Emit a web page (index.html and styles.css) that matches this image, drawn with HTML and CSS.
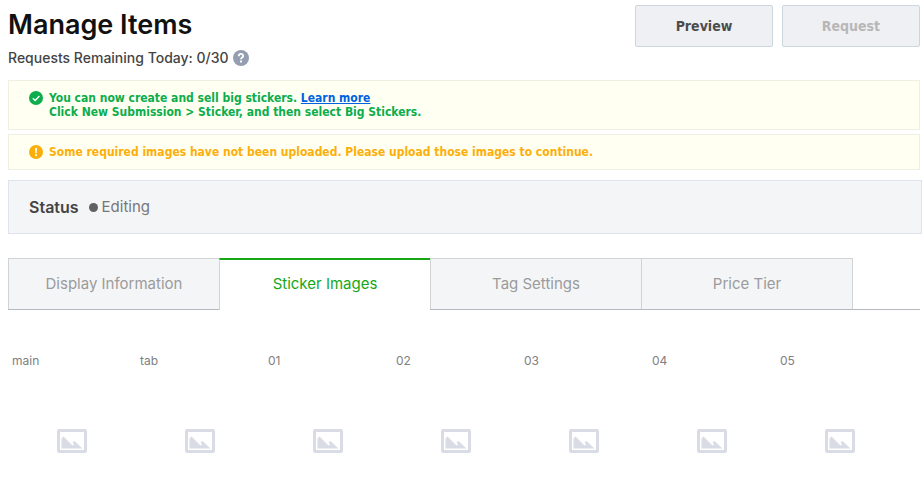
FILE: index.html
```html
<!DOCTYPE html>
<html lang="en">
<head>
<meta charset="utf-8">
<meta name="viewport" content="width=device-width, initial-scale=1">
<title>Manage Items</title>
<link rel="stylesheet" href="styles.css">
</head>
<body>
<svg class="sprite" aria-hidden="true">
  <symbol id="picture" viewBox="0 0 30 24">
    <rect x="1.500" y="1.500" width="27" height="21" rx="0.500" fill="none" stroke="#d9dce4" stroke-width="3"/>
    <path d="M4.500 19.500V9.500L6.500 7.500L15.500 16.500L17 15.500L15.500 13.500L17.500 12L25.500 19.500Z" fill="#d9dce4"/>
  </symbol>
</svg>
<main class="page">
  <header class="header">
    <div class="heading">
      <h1 class="title">Manage Items</h1>
      <p class="quota">Requests Remaining Today: 0/30
        <button class="help" type="button" aria-label="Help">
          <svg class="help-icon" viewBox="0 0 16 16" aria-hidden="true">
            <circle cx="8" cy="8" r="8" fill="#959db0"/>
            <path d="M5.800 6.200C5.800 3.200 10.200 3.300 10.200 5.900C10.200 7.500 8 7.500 8 9.300" fill="none" stroke="#fff" stroke-width="1.800"/>
            <rect x="7" y="10.500" width="2" height="2" fill="#fff"/>
          </svg>
        </button>
      </p>
    </div>
    <div class="actions">
      <button class="action" type="button">Preview</button>
      <button class="action" type="button" disabled>Request</button>
    </div>
  </header>

  <section class="notices">
    <div class="notice success">
      <svg class="notice-icon" viewBox="0 0 14 14" aria-hidden="true">
        <circle cx="7" cy="7" r="7" fill="#0cad4c"/>
        <path d="M3.800 7.200L6.200 9.400L10.400 5" fill="none" stroke="#fff" stroke-width="1.400"/>
      </svg>
      <p class="notice-text">You can now create and sell big stickers. <a class="more" href="#">Learn more</a><br>Click New Submission &gt; Sticker, and then select Big Stickers.</p>
    </div>
    <div class="notice warning">
      <svg class="notice-icon" viewBox="0 0 14 14" aria-hidden="true">
        <circle cx="7" cy="7" r="7" fill="#fcaf0b"/>
        <path d="M6 3H8L7.700 8.200H6.300ZM6.100 9.300H7.900V11H6.100Z" fill="#fff"/>
      </svg>
      <p class="notice-text">Some required images have not been uploaded. Please upload those images to continue.</p>
    </div>
  </section>

  <dl class="status">
    <dt class="status-name">Status</dt>
    <dd class="status-value">Editing</dd>
  </dl>

  <nav class="tabs">
    <a class="tab" href="#">Display Information</a>
    <a class="tab active" href="#" aria-current="page">Sticker Images</a>
    <a class="tab" href="#">Tag Settings</a>
    <a class="tab" href="#">Price Tier</a>
  </nav>

  <ul class="gallery">
    <li class="item"><span class="label">main</span><svg class="thumb" aria-hidden="true"><use href="#picture"/></svg></li>
    <li class="item"><span class="label">tab</span><svg class="thumb" aria-hidden="true"><use href="#picture"/></svg></li>
    <li class="item"><span class="label">01</span><svg class="thumb" aria-hidden="true"><use href="#picture"/></svg></li>
    <li class="item"><span class="label">02</span><svg class="thumb" aria-hidden="true"><use href="#picture"/></svg></li>
    <li class="item"><span class="label">03</span><svg class="thumb" aria-hidden="true"><use href="#picture"/></svg></li>
    <li class="item"><span class="label">04</span><svg class="thumb" aria-hidden="true"><use href="#picture"/></svg></li>
    <li class="item"><span class="label">05</span><svg class="thumb" aria-hidden="true"><use href="#picture"/></svg></li>
  </ul>
</main>
</body>
</html>
```
FILE: styles.css
```css
* {
  box-sizing: border-box;
}

body {
  margin: 0;
  background: #fff;
  color: #444;
  font-family: Inter, "Liberation Sans", sans-serif;
}

.sprite {
  display: none;
}

.page {
  padding: 5px 4px 0 8px;
}

.header {
  display: flex;
  justify-content: space-between;
  align-items: flex-start;
}

.title {
  margin: 0;
  color: #111;
  font-size: 27px;
  font-weight: 600;
  line-height: 40px;
}

.quota {
  display: flex;
  align-items: center;
  gap: 4px;
  margin: 0;
  font-size: 14px;
  font-weight: 500;
  line-height: 26px;
}

.help {
  display: flex;
  padding: 0;
  border: 0;
  background: none;
}

.help-icon {
  width: 16px;
  height: 16px;
}

.actions {
  display: flex;
  gap: 9px;
}

.action {
  width: 138px;
  height: 42px;
  padding: 0;
  border: 1px solid #ced6dd;
  border-radius: 2px;
  background: #eff0f4;
  color: #4c4c4c;
  font: bold 14px/20px "DejaVu Sans Condensed", "Noto Sans", sans-serif;
}

.action:disabled {
  color: #b7b7b7;
}

.notices {
  display: grid;
  gap: 4px;
  margin-top: 9px;
}

.notice {
  display: flex;
  gap: 6px;
  padding: 10px 20px;
  border: 1px solid #efefe4;
  background: #fffff2;
  font: bold 12px/14px "DejaVu Sans Condensed", "Noto Sans", sans-serif;
}

.success {
  color: #0cad4c;
}

.warning {
  color: #fcaf0b;
}

.notice-icon {
  flex: none;
  width: 14px;
  height: 14px;
}

.notice-text {
  margin: 0;
}

.more {
  color: #0062e0;
}

.status {
  display: flex;
  align-items: center;
  gap: 10px;
  margin: 10px -2px 24px 0;
  padding: 16px 20px;
  border: 1px solid #dfe3ee;
  background: #f4f5f7;
  font-size: 15px;
  line-height: 20px;
}

.status-name {
  font-size: 16px;
  font-weight: 600;
}

.status-value {
  display: flex;
  align-items: center;
  gap: 4px;
  margin: 0;
  color: #777;
}

.status-value::before {
  width: 9px;
  height: 9px;
  border-radius: 50%;
  background: #616161;
  content: "";
}

.tabs {
  display: flex;
  border-bottom: 1px solid #b5b8c0;
}

.tab {
  flex: 0 1 211px;
  height: 51px;
  border: solid #d2d3d5;
  border-width: 1px 0 0 1px;
  background: #f4f5f7;
  color: #9b9b9b;
  font-size: 15px;
  line-height: 50px;
  text-align: center;
  text-decoration: none;
}

.tab:last-child {
  flex-basis: 212px;
  border-right-width: 1px;
}

.active {
  height: 52px;
  margin-bottom: -1px;
  border-top: 2px solid #16a716;
  background: #fff;
  color: #16a716;
  line-height: 48px;
}

.gallery {
  display: grid;
  grid-template-columns: repeat(auto-fill, 128px);
  margin: 41px 0 0;
  padding: 0;
  list-style: none;
}

.item {
  display: grid;
  justify-items: center;
  gap: 58px;
}

.label {
  justify-self: start;
  padding-left: 4px;
  color: #808080;
  font-size: 12px;
  line-height: 20px;
}

.thumb {
  width: 30px;
  height: 24px;
}
```
